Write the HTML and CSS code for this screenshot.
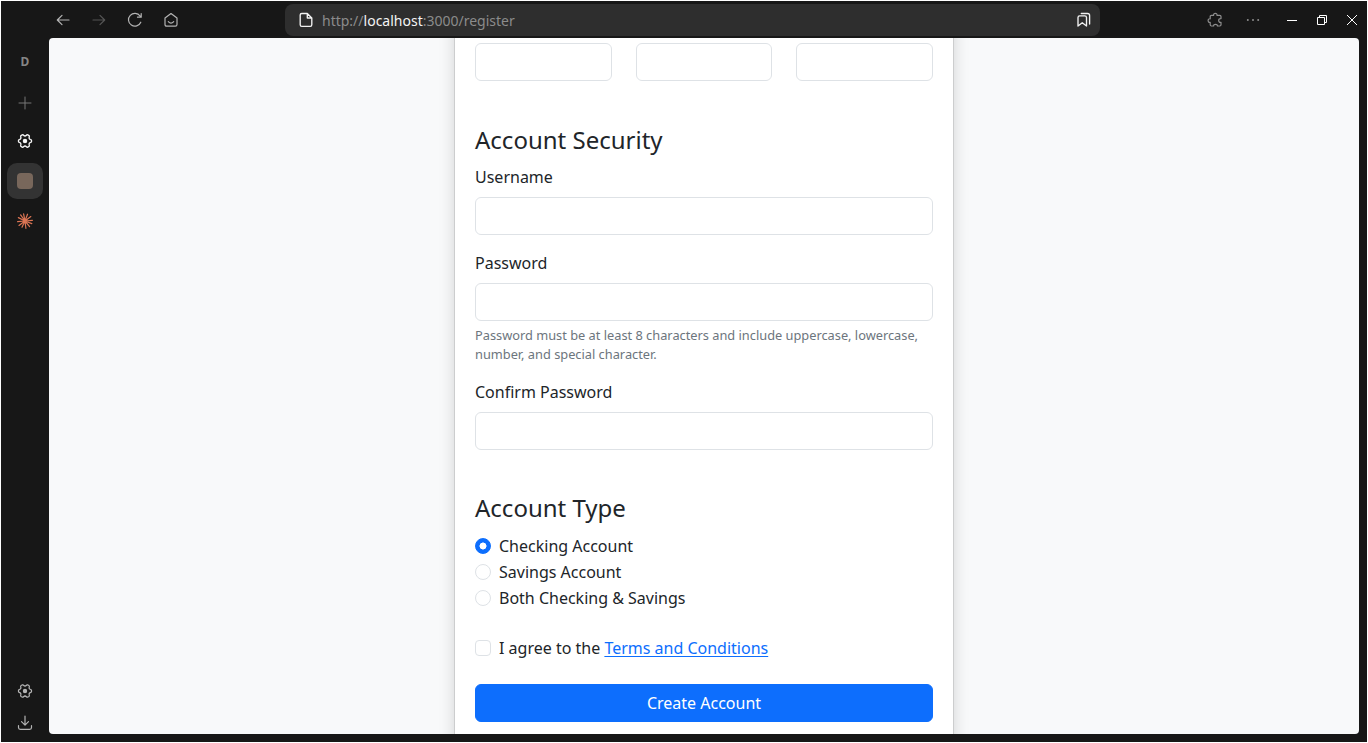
FILE: index.html
```html
<!DOCTYPE html>
<html lang="en">
<head>
<meta charset="utf-8">
<title>Register</title>
<link rel="stylesheet" href="styles.css">
</head>
<body>
<div class="window">
  <header class="toolbar">
    <nav class="nav-buttons">
      <svg class="icon" viewBox="0 0 16 16"><path d="M14 8H2.3M7 3.3L2.3 8L7 12.7"/></svg>
      <svg class="icon disabled" viewBox="0 0 16 16"><path d="M2 8h11.7M9 3.3L13.7 8L9 12.7"/></svg>
      <svg class="icon" viewBox="0 0 16 16"><path d="M13.8 10.2A6.4 6.4 0 1 1 13.1 4M14.2 1.5V5.2H10.5"/></svg>
      <svg class="icon" viewBox="0 0 16 16"><path d="M2 6L8 1.5L14 6V12.5Q14 14.2 12.3 14.2H3.7Q2 14.2 2 12.5ZM5.3 9.6Q8 12.5 10.7 9.6"/></svg>
    </nav>
    <div class="address">
      <svg class="icon bright" viewBox="0 0 16 16"><path d="M3.8 1.5H9.3L13.8 6V12.8Q13.8 14.4 12.2 14.4H3.8Q2.2 14.4 2.2 12.8V3.1Q2.2 1.5 3.8 1.5ZM9.3 1.7V6H13.6"/></svg>
      <span class="url">http://<b>localhost</b>:3000/register</span>
      <svg class="icon bright" viewBox="0 0 16 16"><path d="M2 5.5Q2 3.8 3.7 3.8H8.8Q10.5 3.8 10.5 5.5V14L6.25 10.8L2 14ZM5.3 1.5H11.5Q13.6 1.5 13.6 3.6V12"/></svg>
    </div>
    <div class="tools">
      <svg class="icon dim" viewBox="0 0 16 16"><path d="M4.4 3.4H6.6C5.9 .6 10.7 .6 10 3.4H12.8Q14 3.4 14 4.6V6.6C10.9 6.1 10.9 10.9 14 10.4V12.8Q14 14 12.8 14H10.4C10.8 11.8 6.2 11.8 6.6 14H4.4Q3.2 14 3.2 12.8V10.4C.4 11 .4 6.2 3.2 6.8V4.6Q3.2 3.4 4.4 3.4Z"/></svg>
      <svg class="icon dots" viewBox="0 0 16 16"><circle cx="2.8" cy="8" r="1"/><circle cx="8" cy="8" r="1"/><circle cx="13.2" cy="8" r="1"/></svg>
    </div>
    <div class="controls">
      <svg class="control" viewBox="0 0 12 12"><path d="M1 6.5H11"/></svg>
      <svg class="control" viewBox="0 0 12 12"><path d="M1.5 3.5H8.5V10.5H1.5ZM3.5 3.5V1.5H10.5V8.5H8.5"/></svg>
      <svg class="control" viewBox="0 0 12 12"><path d="M1 1L11 11M11 1L1 11"/></svg>
    </div>
  </header>
  <div class="main">
    <aside class="sidebar">
      <span class="workspace">D</span>
      <svg class="icon plus" viewBox="0 0 16 16"><path d="M8 2V14M2 8H14"/></svg>
      <svg class="icon flower bright" viewBox="0 0 16 16"><path d="M5.2 1.9Q6.1 1.5 6.5 2.3Q8 3.7 9.5 2.3Q9.9 1.5 10.8 1.9L12 2.6Q12.7 3.2 12.2 4Q11.7 6.1 13.7 6.6Q14.6 6.7 14.6 8Q14.6 9.3 13.7 9.4Q11.7 9.9 12.2 12Q12.7 12.8 12 13.4L10.8 14.1Q9.9 14.5 9.5 13.7Q8 12.3 6.5 13.7Q6.1 14.5 5.2 14.1L4 13.4Q3.3 12.8 3.8 12Q4.3 9.9 2.3 9.4Q1.4 9.3 1.4 8Q1.4 6.7 2.3 6.6Q4.3 6.1 3.8 4Q3.3 3.2 4 2.6Z"/><circle cx="8" cy="8" r="1.6"/></svg>
      <div class="active-tab"><span class="favicon"></span></div>
      <svg class="icon burst" viewBox="0 0 16 16"><path d="M8 8L6.6 .8M8 8L10.5 1.2M8 8L13.8 3.6M8 8L15.4 7.4M8 8L14.8 10.6M8 8L12.6 13.6M8 8L8.9 15.3M8 8L5 14.2M8 8L2 12.4M8 8L.6 8.6M8 8L1.4 4.6M8 8L3.6 1.9"/></svg>
      <div class="spacer"></div>
      <svg class="icon flower" viewBox="0 0 16 16"><path d="M5.2 1.9Q6.1 1.5 6.5 2.3Q8 3.7 9.5 2.3Q9.9 1.5 10.8 1.9L12 2.6Q12.7 3.2 12.2 4Q11.7 6.1 13.7 6.6Q14.6 6.7 14.6 8Q14.6 9.3 13.7 9.4Q11.7 9.9 12.2 12Q12.7 12.8 12 13.4L10.8 14.1Q9.9 14.5 9.5 13.7Q8 12.3 6.5 13.7Q6.1 14.5 5.2 14.1L4 13.4Q3.3 12.8 3.8 12Q4.3 9.9 2.3 9.4Q1.4 9.3 1.4 8Q1.4 6.7 2.3 6.6Q4.3 6.1 3.8 4Q3.3 3.2 4 2.6Z"/><circle cx="8" cy="8" r="1.6"/></svg>
      <svg class="icon download" viewBox="0 0 16 16"><path d="M8 1V10M4.5 6.7L8 10.2L11.5 6.7M1.5 10.5V12.5Q1.5 14.3 3.3 14.3H12.7Q14.5 14.3 14.5 12.5V10.5"/></svg>
    </aside>
    <main class="page">
      <form class="card">
        <div class="row">
          <input class="field" type="text" aria-label="City">
          <input class="field" type="text" aria-label="State">
          <input class="field" type="text" aria-label="ZIP">
        </div>
        <section class="section">
          <h4 class="title">Account Security</h4>
          <div class="group">
            <label class="label" for="username">Username</label>
            <input class="field" id="username" type="text">
          </div>
          <div class="group">
            <label class="label" for="password">Password</label>
            <input class="field" id="password" type="password">
            <div class="hint">Password must be at least 8 characters and include uppercase, lowercase, number, and special character.</div>
          </div>
          <div class="group">
            <label class="label" for="confirm">Confirm Password</label>
            <input class="field" id="confirm" type="password">
          </div>
        </section>
        <section class="section">
          <h4 class="title">Account Type</h4>
          <label class="check"><input class="choice radio" type="radio" name="type" checked>Checking Account</label>
          <label class="check"><input class="choice radio" type="radio" name="type">Savings Account</label>
          <label class="check"><input class="choice radio" type="radio" name="type">Both Checking &amp; Savings</label>
        </section>
        <label class="check terms"><input class="choice" type="checkbox"><span>I agree to the <a class="link" href="#">Terms and Conditions</a></span></label>
        <button class="submit" type="button">Create Account</button>
      </form>
    </main>
  </div>
</div>
</body>
</html>
```
FILE: styles.css
```css
* { box-sizing: border-box; }

body {
  margin: 0;
  height: 743px;
  padding: 1px;
  overflow: hidden;
  background: #fff;
  color: #212529;
  font: 16px/1.5 "Noto Sans", sans-serif;
}

.window {
  display: flex;
  flex-direction: column;
  height: 741px;
  background: #171717;
}

/* Browser chrome */
.icon {
  width: 16px;
  height: 16px;
  flex: none;
  fill: none;
  stroke: #b4b4b4;
  stroke-width: 1.2;
  stroke-linecap: round;
  stroke-linejoin: round;
}
.icon.bright { stroke: #f2f2f2; stroke-width: 1.35; }
.icon.disabled { stroke: #555; }
.icon.dim { stroke: #8e8e8e; }
.icon.dots { fill: #8e8e8e; stroke: none; }

.toolbar {
  display: flex;
  height: 37px;
  flex: none;
  align-items: center;
}
.nav-buttons {
  display: flex;
  gap: 20px;
  width: 284px;
  padding-left: 54px;
}
.address {
  display: flex;
  align-items: center;
  width: 815px;
  height: 32px;
  padding: 0 8px 0 13px;
  border-radius: 8px;
  background: #2e2e2e;
}
.url {
  flex: 1;
  padding: 2px 0 0 8px;
  color: #8b8b8b;
  font-size: 14px;
  line-height: 20px;
}
.url b { color: #f4f4f4; font-weight: 400; }
.tools { display: flex; gap: 22px; padding-left: 107px; }
.controls { display: flex; gap: 18px; padding-left: 25px; }
.control {
  width: 12px;
  height: 12px;
  fill: none;
  stroke: #fff;
  stroke-width: 1;
}

.main { display: flex; flex: 1; min-height: 0; padding: 0 8px 8px 0; }
.sidebar {
  display: flex;
  flex-direction: column;
  align-items: center;
  width: 48px;
  padding: 15px 0 3px;
}
.workspace {
  color: #858585;
  font: 700 12px/18px "Noto Sans", sans-serif;
}
.plus { margin-top: 24px; stroke: #777; stroke-width: 1; }
.flower { margin-top: 22px; }
.flower circle { fill: #b4b4b4; }
.flower.bright circle { fill: #fff; }
.active-tab {
  display: grid;
  place-items: center;
  width: 36px;
  height: 36px;
  margin: 14px 0;
  border-radius: 10px;
  background: #333;
}
.favicon {
  width: 16px;
  height: 16px;
  border-radius: 4px;
  background: #78675b;
}
.burst { stroke: #dc7554; stroke-width: 1.2; }
.spacer { flex: 1; }
.download { margin-top: 16px; }

/* Registration page */
.page {
  flex: 1;
  overflow: hidden;
  border-radius: 4px;
  background: #f8f9fa;
}
.card {
  width: 500px;
  height: 800px;
  margin: -50px auto 0;
  padding: 54px 20px 20px;
  border: 1px solid #cccdce;
  border-radius: 6px;
  background: #fff;
  box-shadow: 0 8px 16px rgba(0, 0, 0, .15);
}
.row { display: grid; grid-template-columns: repeat(3, 1fr); gap: 24px; }
.field {
  display: block;
  width: 100%;
  height: 38px;
  padding: 6px 12px;
  border: 1px solid #dee2e6;
  border-radius: 6px;
  background: #fff;
  font: inherit;
}
.section { padding-top: 44px; }
.section + .section { padding-top: 43px; }
.title {
  margin: 0 0 11px;
  font-size: 24px;
  font-weight: 400;
  line-height: 29px;
}
.section + .section .title { margin-bottom: 12px; }
.group + .group { margin-top: 16px; }
.label { display: block; margin-bottom: 8px; }
.hint {
  margin-top: 5px;
  color: #6c757d;
  font-size: 12.8px;
  line-height: 19.2px;
}
.check {
  display: flex;
  align-items: center;
  gap: 8px;
  height: 24px;
  margin-bottom: 2px;
}
.choice {
  appearance: none;
  width: 16px;
  height: 16px;
  margin: 0;
  border: 1px solid #dee2e6;
  border-radius: 4px;
  background: #fff;
}
.radio { border-radius: 50%; }
.radio:checked {
  border-color: #0d6efd;
  background: radial-gradient(circle, #fff 3.2px, #0d6efd 3.8px);
}
.terms { margin: 26px 0 24px; }
.link { color: #0d6efd; text-underline-offset: 2px; }
.submit {
  display: block;
  width: 100%;
  height: 38px;
  padding: 6px 12px;
  border: 1px solid #0d6efd;
  border-radius: 6px;
  background: #0d6efd;
  color: #fff;
  font: inherit;
}
```
